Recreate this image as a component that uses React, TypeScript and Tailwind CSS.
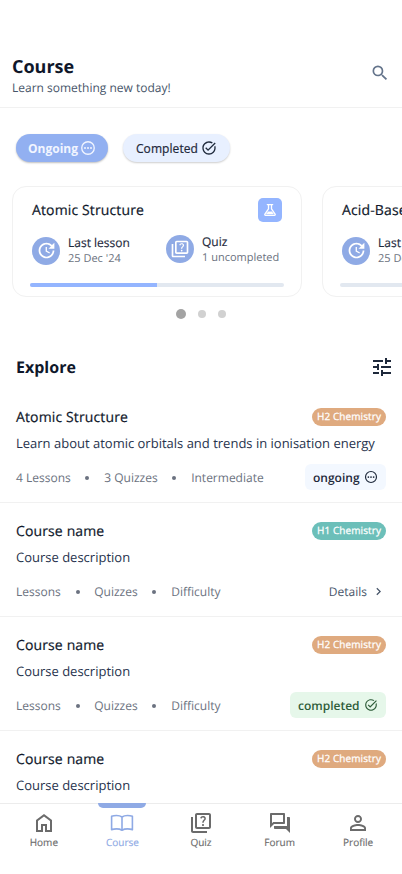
import React from "react";
import {
  MdSearch,
  MdUpdate,
  MdOutlineQuiz,
  MdOutlineForum,
  MdPersonOutline,
  MdTune,
  MdChevronRight,
  MdTaskAlt,
} from "react-icons/md";

function OngoingIcon({ className }: { className: string }) {
  return (
    <svg viewBox="0 0 24 24" fill="none" className={className}>
      <circle cx="12" cy="12" r="9.4" stroke="currentColor" strokeWidth="2" />
      <circle cx="7.5" cy="12" r="1.5" fill="currentColor" />
      <circle cx="12" cy="12" r="1.5" fill="currentColor" />
      <circle cx="16.5" cy="12" r="1.5" fill="currentColor" />
    </svg>
  );
}

function FlaskIcon() {
  return (
    <svg viewBox="0 0 16 16" fill="none" stroke="currentColor" strokeWidth="1.300" strokeLinecap="round" strokeLinejoin="round" className="size-4">
      <path d="M5.300 2.600h5.400M6.500 2.800v4L2.900 12.200c-.4.600 0 1.200.6 1.200h9c.6 0 1-.6.6-1.200L9.500 6.800v-4" />
      <path d="M6 9.800h4l1.500 2.300h-7z" fill="currentColor" strokeWidth="0.400" />
    </svg>
  );
}

function HomeIcon() {
  return (
    <svg viewBox="0 -960 960 960" fill="currentColor" className="size-6">
      <path d="M240-200h120v-240h240v240h120v-360L480-740 240-560v360Zm-80 80v-480l320-240 320 240v480H520v-240h-80v240H160Z" />
    </svg>
  );
}

function BookIcon() {
  return (
    <svg viewBox="0 0 24 24" fill="none" stroke="currentColor" strokeWidth="1.600" strokeLinejoin="round" className="size-6">
      <path d="M12 6C10.500 4.900 8.700 4.500 6.500 4.500c-1.900 0-3.600.3-4.900.8V18.700c1.300-.5 3-.8 4.900-.8 2.200 0 4 .4 5.500 1.300 1.500-.9 3.300-1.300 5.500-1.300 1.900 0 3.600.3 4.900.8V5.300c-1.300-.5-3-.8-4.900-.8-2.200 0-4 .4-5.500 1.500zM12 6v13.200" />
    </svg>
  );
}

function Stat({ icon, title, sub }: { icon: React.ReactNode; title: string; sub: string }) {
  return (
    <div className="flex items-center gap-2">
      <div className="flex size-7 items-center justify-center rounded-full bg-[#8faae5] text-white">{icon}</div>
      <div className="whitespace-nowrap">
        <div className="text-[12px] leading-4 text-[#1e293b] [-webkit-text-stroke:0.15px]">{title}</div>
        <div className="text-[11px] leading-[15px] text-[#6b7280]">{sub}</div>
      </div>
    </div>
  );
}

function CourseCard({ title, progress }: { title: string; progress: number }) {
  return (
    <div className="h-[111px] w-[290px] shrink-0 rounded-[14px] border border-[#f1f1f1] bg-white pt-[11px]">
      <div className="flex h-6 items-center justify-between pl-[19px] pr-[19px]">
        <h3 className="pt-[2px] text-[14px] leading-6 tracking-[0.13px] text-[#0f172a] [-webkit-text-stroke:0.2px]">{title}</h3>
        <div className="flex size-6 items-center justify-center rounded-[5px] bg-[#94b5ff] text-white">
          <FlaskIcon />
        </div>
      </div>
      <div className="mt-3 flex h-[30px] pl-[19px]">
        <div className="w-[134px] pt-px">
          <Stat icon={<MdUpdate className="size-[21px]" />} title="Last lesson" sub="25 Dec '24" />
        </div>
        <Stat icon={<MdOutlineQuiz className="size-5" />} title="Quiz" sub="1 uncompleted" />
      </div>
      <div className="mt-[19px] ml-[17px] h-1 w-[254px] overflow-hidden rounded-full bg-[#e2e8f0]">
        <div className="h-full bg-[#94b5ff]" style={{ width: `${progress}%` }} />
      </div>
    </div>
  );
}

type Course = {
  name: string;
  description: string;
  meta: string[];
  level: "H1" | "H2";
  status: "ongoing" | "details" | "completed";
};

const courses: Course[] = [
  {
    name: "Atomic Structure",
    description: "Learn about atomic orbitals and trends in ionisation energy",
    meta: ["4 Lessons", "3 Quizzes", "Intermediate"],
    level: "H2",
    status: "ongoing",
  },
  { name: "Course name", description: "Course description", meta: ["Lessons", "Quizzes", "Difficulty"], level: "H1", status: "details" },
  { name: "Course name", description: "Course description", meta: ["Lessons", "Quizzes", "Difficulty"], level: "H2", status: "completed" },
  { name: "Course name", description: "Course description", meta: ["Lessons", "Quizzes", "Difficulty"], level: "H2", status: "details" },
];

function Status({ status }: { status: Course["status"] }) {
  if (status === "ongoing")
    return (
      <div className="flex h-[26px] w-[81px] items-center justify-between rounded-md bg-[#f3f8ff] px-2 text-[12px] font-semibold text-[#1e293b]">
        <span className="pt-px">ongoing</span> <OngoingIcon className="size-[14px]" />
      </div>
    );
  if (status === "completed")
    return (
      <div className="flex h-[26px] w-24 items-center justify-between rounded-md bg-[#e6f7ea] px-2 text-[12px] font-semibold text-[#2f5d3a]">
        <span className="pt-px">completed</span> <MdTaskAlt className="size-[14px]" />
      </div>
    );
  return (
    <div className="flex h-[26px] items-center gap-1 text-[12px] text-[#475569]">
      <span className="pt-px">Details</span> <MdChevronRight className="size-[15px]" />
    </div>
  );
}

function CourseRow({ course }: { course: Course }) {
  return (
    <li className="h-[114px] border-b border-[#f1f1f1] pr-4 pl-4 pt-4">
      <div className="flex h-6 items-center justify-between">
        <h3 className="pt-[2px] text-[14px] leading-6 tracking-[0.13px] text-[#0f172a] [-webkit-text-stroke:0.2px]">{course.name}</h3>
        <span
          className={
            "flex h-[18px] w-[74px] items-center justify-center rounded-full pb-px text-[10px] tracking-[0.1px] whitespace-nowrap text-white [-webkit-text-stroke:0.25px] " +
            (course.level === "H2" ? "bg-[#dfaa7f]" : "bg-[#6cbfb9]")
          }
        >
          {course.level} Chemistry
        </span>
      </div>
      <p className="mt-[3px] text-[13px] leading-[22px] whitespace-nowrap text-[#27334d]">{course.description}</p>
      <div className="mt-2 flex h-[30px] items-center justify-between">
        <div className="flex items-center pt-[2px] text-[12px] text-[#6b7280]">
          {course.meta.map((m, i) => (
            <React.Fragment key={m}>
              {i > 0 && <span className="mx-[14.750px] size-1 rounded-full bg-[#6b7280]" />}
              <span>{m}</span>
            </React.Fragment>
          ))}
        </div>
        <Status status={course.status} />
      </div>
    </li>
  );
}

const tabs = [
  { label: "Home", icon: <HomeIcon /> },
  { label: "Course", icon: <BookIcon />, active: true },
  { label: "Quiz", icon: <MdOutlineQuiz className="size-6" /> },
  { label: "Forum", icon: <MdOutlineForum className="size-6" /> },
  { label: "Profile", icon: <MdPersonOutline className="size-6" /> },
];

export default function App() {
  return (
    <div className="flex h-[874px] w-[402px] flex-col overflow-hidden bg-white font-['Open_Sans',sans-serif] [text-rendering:geometricPrecision]">
      <header className="flex h-[108px] shrink-0 justify-between border-b border-[#f1f1f1] pr-3 pl-3 pt-[54px]">
        <div>
          <h1 className="pt-px text-[18px] leading-6 font-bold text-[#0f172a]">Course</h1>
          <p className="text-[12px] leading-[18px] text-[#475569]">Learn something new today!</p>
        </div>
        <MdSearch className="mt-[9px] size-5 text-[#64748b]" />
      </header>

      <main className="min-h-0 flex-1 overflow-hidden">
        <div className="flex gap-[15px] pl-4 pt-[26px]">
          <button className="flex h-7 w-[92px] items-center justify-center gap-[2px] rounded-full bg-[#92b0f1] text-[12px] font-bold text-[#f1f5ff] shadow-[0_1px_2px_rgba(0,0,0,0.25)]">
            <span className="pt-px">Ongoing</span> <OngoingIcon className="size-4" />
          </button>
          <button className="flex h-7 w-[107px] items-center justify-center gap-[3px] rounded-full bg-[#e8f0ff] text-[12px] tracking-[0.08px] text-[#1e293b] shadow-[0_1px_2px_rgba(0,0,0,0.2)]">
            <span className="pt-px [-webkit-text-stroke:0.2px]">Completed</span> <MdTaskAlt className="size-4" />
          </button>
        </div>

        <div className="mt-6 flex gap-5 pl-3">
          <CourseCard title="Atomic Structure" progress={50} />
          <CourseCard title="Acid-Base Equilibria" progress={0} />
        </div>

        <div className="mt-3 flex h-[10px] items-center justify-center gap-3">
          <span className="size-[10px] rounded-full bg-[#a3a3a3]" />
          <span className="size-2 rounded-full bg-[#d1d1d1]" />
          <span className="size-2 rounded-full bg-[#d1d1d1]" />
        </div>

        <div className="mt-9 flex h-6 items-center justify-between pr-2 pl-4">
          <h2 className="text-[16px] leading-6 font-bold text-[#0f172a]">Explore</h2>
          <MdTune className="size-6 text-[#1e293b]" />
        </div>
        <ul className="mt-[10px]">
          {courses.map((c, i) => (
            <CourseRow key={i} course={c} />
          ))}
        </ul>
      </main>

      <nav className="flex h-[71px] shrink-0 border-t border-[#ececec] bg-white px-[4.6px]">
        {tabs.map((t) => (
          <div
            key={t.label}
            className={"flex flex-1 flex-col items-center " + (t.active ? "text-[#8faae5]" : "text-[#6b6b6b]")}
          >
            <span className={"-mt-px h-[5px] w-12 rounded-b-[5px] " + (t.active ? "bg-[#8faae5]" : "")} />
            <span className="mt-[3px]">{t.icon}</span>
            <span className="text-[10px] leading-[14px] [-webkit-text-stroke:0.15px]">{t.label}</span>
          </div>
        ))}
      </nav>
    </div>
  );
}
